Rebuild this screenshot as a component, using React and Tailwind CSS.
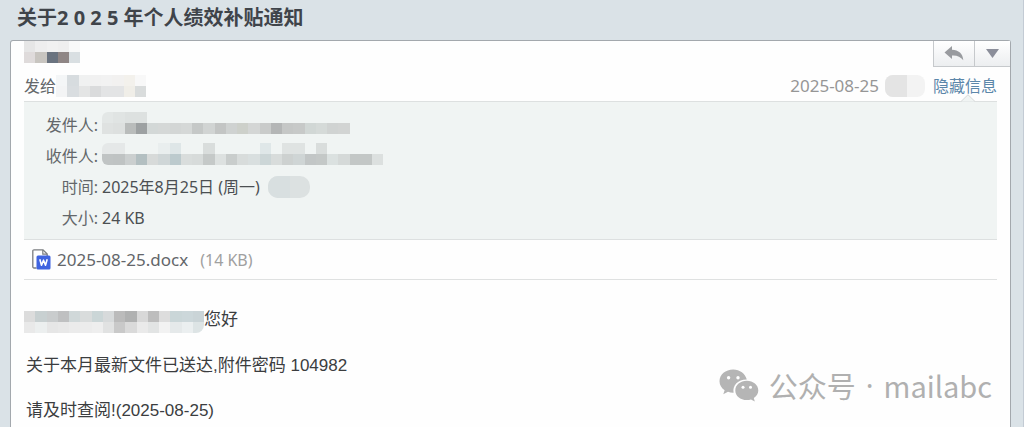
import React, { useState } from 'react';

const CELL_WIDTH = 11.25;
const CELL_HEIGHT = 11;

// Each row is a list of cell colours, '' leaves the cell empty
const NAME_CELLS = [
  ['#e6e6e6', '#eeeeee', '#f1f1f1', '#efefef', '#f8f9f9'],
  ['#dfdbdb', '#c8c5c0', '#6a737f', '#8f8685', '#d9dfe2'],
];

const TO_CELLS = [
  ['#f4f6f7', '#d7dcdf', '#f0f1f1', '#f1f1f1', '#f2f2f2', '#f2f1f0', '#f3f1ec', '#f8f8f8'],
  ['#f3f4f5', '#d9dde0', '#e4e5e5', '#dadbdc', '#e3e4e5', '#e3e4e5', '#f0eee8', '#d9dcdc'],
];

const SENDER_CELLS = [
  ['#e3e7e6', '#e0e4e3', '#dde1e0', '#dde1e0'],
  ['#dfe2e1', '#dde0df', '#b9bcbb', '#9da1a2', '#d3d8d7', '#d5d8d7', '#d3d6d5', '#d5d8d7', '#c5c8c7', '#d1d4d3', '#c3c5c4', '#cfd2d1', '#cdd0ca', '#d4d6d5', '#c9cbca', '#b4b6b6', '#c5c7c6', '#c7c9c8', '#d1d7d5', '#d5dad8', '#d0d3d2', '#d2d4d3'],
];

const RECEIVER_CELLS = [
  ['#e5e8e8', '#e5e8e8', '', '', '', '#e9eeee', '#dee6e7', '', '', '#d9dddc', '', '', '', '', '#dfe7e8', '', '#dfe3e2', '#dfe3e2', '', '#d9dddc', '', '', '', '', ''],
  ['#c0c4c4', '#bfc3c3', '#cbcfcf', '#b3bfc1', '#d7dad9', '#cfd6d7', '#bccacd', '#d9dddc', '#d7dbda', '#c5c9c8', '#dde1e0', '#c9cdcc', '#d8dcdb', '#d9dfdf', '#ccd6d7', '#d8dcdb', '#cdd1d0', '#cfd5d5', '#c2c6c6', '#c4c8c7', '#dbe1e0', '#d5d9d8', '#c3c7c6', '#c3c7c6', '#dce0df'],
];

const GREETING_CELLS = [
  ['#dcdcdc', '#c8d0d1', '#c9cccd', '#bfc0c1', '#d0d8d9', '#d9dcdc', '#cbd6d7', '#d7dadb', '#bbbbbb', '#b0b1b1', '#d8d8d8', '#bdbdbd', '#dddddd', '#cad6d8', '#ccd7da', '#cad4d7'],
  ['#e9e9e9', '#ecefef', '#e6e6e6', '#e8e8e8', '#ebebeb', '#ececec', '#eeeeee', '#e1e2e2', '#c9c9c9', '#dadada', '#eaeaea', '#e2e4e4', '#f2f2f2', '#e5e9ea', '#ebeff0', '#dde4e5'],
];

const Mosaic = ({ cells, className = '' }) => {
  const cols = Math.max(...cells.map((row) => row.length));
  return (
    <svg
      aria-hidden="true"
      width={Math.round(cols * CELL_WIDTH)}
      height={cells.length * CELL_HEIGHT}
      shapeRendering="crispEdges"
      className={`shrink-0 ${className}`}
    >
      {cells.map((row, y) =>
        row.map((fill, x) =>
          fill ? (
            <rect
              key={`${x}-${y}`}
              x={x * CELL_WIDTH}
              y={y * CELL_HEIGHT}
              width={CELL_WIDTH}
              height={CELL_HEIGHT}
              fill={fill}
            />
          ) : null
        )
      )}
    </svg>
  );
};

const ReplyIcon = () => (
  <svg aria-hidden="true" width="20" height="15" viewBox="0 0 20 15" fill="#999b9f">
    <path d="M8 0 L0.5 6.500 L8 13 V9.500 C13 9.200 16.500 10.500 19.300 14.300 C18.900 7.500 14.500 4 8 3.700 Z" />
  </svg>
);

const DocIcon = () => (
  <svg aria-hidden="true" width="19" height="21" viewBox="0 0 19 21" fill="none">
    <path d="M4.5 19H2A1.2 1.2 0 0 1 .8 17.8V2A1.2 1.2 0 0 1 2 .8H11L15.2 5V7" stroke="#7b7d80" strokeWidth="1.3" />
    <path d="M10.8 1V5.2H15" stroke="#7b7d80" strokeWidth="1.2" />
    <rect x="4.5" y="6.5" width="14" height="14" rx="1.5" fill="#3f63e0" />
    <path d="M7.8 10.3L9.5 16.2L11.5 11.2L13.5 16.2L15.2 10.3" stroke="#fff" strokeWidth="1.6" strokeLinejoin="round" />
  </svg>
);

const WechatIcon = () => (
  <svg aria-hidden="true" width="40" height="33" viewBox="0 0 40 33">
    <path
      fill="#b5b5b5"
      d="M14.2 .5C6.6 .5 .5 5.6 .5 12.2C.5 15.9 2.5 19 5.6 21.2L4.3 25.3L9 22.8C10.8 23.4 12.6 23.8 14.6 23.7C13.2 16.2 19.5 10.3 27.8 10.5C26.4 4.7 20.8 .5 14.2 .5Z"
    />
    <path
      fill="#b5b5b5"
      d="M27.8 11.8C21.3 11.8 16.3 16.1 16.3 21.4C16.3 26.8 21.3 31 27.8 31C29.3 31 30.7 30.8 32 30.4L35.8 32.5L34.8 29C37.5 27.2 39.3 24.5 39.3 21.4C39.3 16.1 34.2 11.8 27.8 11.8Z"
    />
    <g fill="#fff">
      <circle cx="9.6" cy="8.7" r="1.7" />
      <circle cx="19" cy="8.7" r="1.7" />
      <circle cx="24" cy="18.3" r="1.5" />
      <circle cx="31.5" cy="18.3" r="1.5" />
    </g>
  </svg>
);

const InfoRow = ({ label, children }) => (
  <div className="flex h-[31px] items-center gap-1">
    <dt className="w-[74px] shrink-0 text-right text-[#63676a]">{label}</dt>
    <dd className="flex items-center gap-2 text-[#4b4f52]">{children}</dd>
  </div>
);

const toolButton = 'flex h-full items-center justify-center bg-linear-to-b from-white to-[#eceef0]';

export default function App() {
  const [showInfo, setShowInfo] = useState(true);

  const toggleInfo = (event) => {
    event.preventDefault();
    setShowInfo(!showInfo);
  };

  return (
    <div className="flex min-h-screen flex-col border-r border-[#c3cbd4] bg-[#dae2e7] pr-3 pl-2.5 font-['Noto_Sans','Noto_Sans_CJK_SC',sans-serif] text-base text-[#4b4f52]">
      <h1 className="flex h-10 items-center px-[7px] pb-1 text-xl font-bold whitespace-nowrap text-[#3f444a]">
        关于2 0 2 5 年个人绩效补贴通知
      </h1>

      <main className="relative flex-1 rounded-t-[3px] border border-b-0 border-[#a3a8ad] bg-[#fefefe]">
        <header className="flex items-start justify-between pl-[13px]">
          <Mosaic cells={NAME_CELLS} />
          <div className="flex h-[26px] border-b border-l border-[#c6c9cc]">
            <button type="button" aria-label="回复" className={`${toolButton} w-10`}>
              <ReplyIcon />
            </button>
            <button type="button" aria-label="更多" className={`${toolButton} w-9 border-l border-[#c6c9cc]`}>
              <svg aria-hidden="true" width="13" height="9" fill="#8b8e9a">
                <path d="M0 0H13L6.5 9Z" />
              </svg>
            </button>
          </div>
        </header>

        <div className="mx-[13px]">
          <div className="flex h-[34px] items-center justify-between pt-1">
            <div className="flex items-center">
              <span className="text-[#63676a]">发给</span>
              <Mosaic cells={TO_CELLS} />
            </div>
            <div className="flex items-center">
              <time dateTime="2025-08-25" className="text-[17px] text-[#969696]">2025-08-25</time>
              <span className="mr-2 ml-1.5 flex h-[22px] w-10 overflow-hidden rounded-lg bg-[#f3f3f3]">
                <span className="w-[22px] bg-[#e4e4e4]" />
              </span>
              <a href="#info" onClick={toggleInfo} className="relative text-[#5c87aa]">
                隐藏信息
                {showInfo && (
                  <svg aria-hidden="true" width="14" height="8" className="absolute top-5 left-7">
                    <path d="M0 7.5L7 .7L14 7.5" fill="#f0f4f3" stroke="#d5d9d9" />
                  </svg>
                )}
              </a>
            </div>
          </div>

          {showInfo && (
            <dl id="info" className="border-y border-[#dde0e0] bg-[#f0f4f3] pt-[7px] pb-1.5">
              <InfoRow label="发件人:">
                <Mosaic cells={SENDER_CELLS} className="mb-1 rounded-tl-md" />
              </InfoRow>
              <InfoRow label="收件人:">
                <Mosaic cells={RECEIVER_CELLS} className="mb-1 rounded-l-md" />
              </InfoRow>
              <InfoRow label="时间:">
                2025年8月25日 (周一)
                <span className="flex h-[22px] w-[42px] overflow-hidden rounded-[10px] bg-[#dce1e1]">
                  <span className="w-[22px] bg-[#d8dfe0]" />
                </span>
              </InfoRow>
              <InfoRow label="大小:">24 KB</InfoRow>
            </dl>
          )}

          <div className="flex h-10 items-center border-b border-[#dfe1e1] pl-2 text-[17px]">
            <DocIcon />
            <a href="#docx" className="ml-1.5 text-[#63666a]">2025-08-25.docx</a>
            <span className="ml-3 text-base text-[#a0a0a0]">(14 KB)</span>
          </div>

          <div className="flex flex-col gap-[21px] pt-[27px] font-['Liberation_Sans','Noto_Sans_CJK_SC',sans-serif] text-[17px] leading-6 text-[#3b3d3f]">
            <p className="flex items-center">
              <Mosaic cells={GREETING_CELLS} className="mt-1 rounded-br-lg" />
              您好
            </p>
            <p className="pl-0.5">关于本月最新文件已送达,附件密码 104982</p>
            <p className="pl-0.5">请及时查阅!(2025-08-25)</p>
          </div>
        </div>

        <div className="absolute right-[18px] bottom-[22px] flex items-center gap-2.5 font-['Noto_Sans_CJK_SC',sans-serif] text-[29px] leading-10 text-[#b0b0b0]">
          <WechatIcon />
          <span>公众号</span>
          <span className="font-['Noto_Sans',sans-serif]">·</span>
          <span>mailabc</span>
        </div>
      </main>
    </div>
  );
}
